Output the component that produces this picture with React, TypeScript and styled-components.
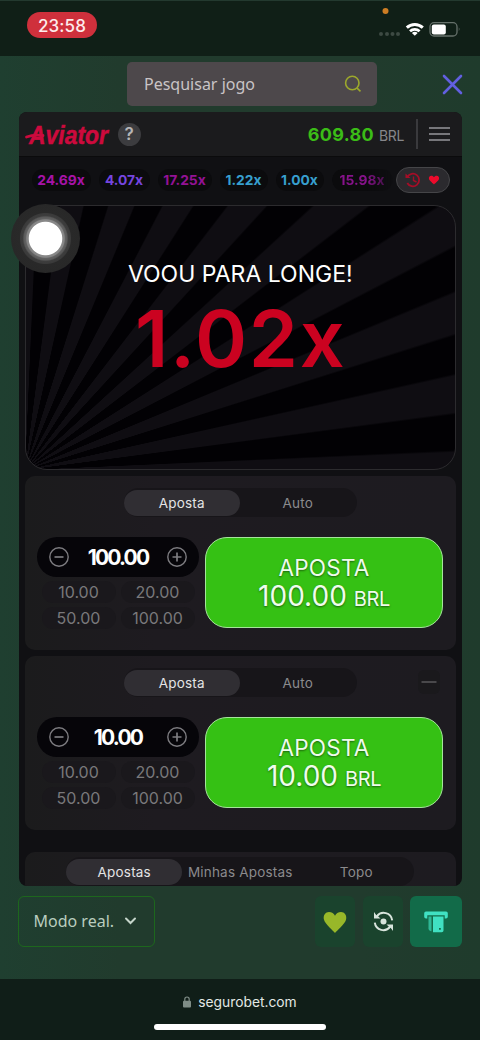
import React from "react";
import styled, { createGlobalStyle } from "styled-components";

const Global = createGlobalStyle`
  * { box-sizing: border-box; }
  body { margin: 0; background: #213b2e; }
  svg { display: block; flex: none; overflow: visible; }
`;

const Page = styled.div`
  position: relative;
  width: 480px;
  height: 1040px;
  overflow: hidden;
  display: flex;
  flex-direction: column;
  background: linear-gradient(90deg, #1f3f30, #213b2d 25%, #213b2d 75%, #1f3b2c);
  font-family: Inter, sans-serif;
  color: #fff;
`;

const StatusBar = styled.header`
  height: 56px;
  flex: none;
  display: flex;
  justify-content: space-between;
  align-items: flex-start;
  padding: 3px 20px 0 27px;
  background: #101f17;
  border-top: 1px solid #23392f;
`;

const Clock = styled.div`
  width: 70px;
  height: 26px;
  margin-top: 8px;
  border-radius: 13px;
  background: #cf303c;
  color: #fdecec;
  font-size: 17px;
  font-weight: 500;
  line-height: 28px;
  text-align: center;
  letter-spacing: 0.1px;
`;

const SearchRow = styled.div`
  height: 56px;
  flex: none;
  display: flex;
  align-items: center;
  justify-content: space-between;
  padding: 0 17px 0 127px;
`;

const SearchBox = styled.div`
  width: 250px;
  height: 44px;
  display: flex;
  align-items: center;
  justify-content: space-between;
  padding: 0 15px 0 17px;
  border-radius: 5px;
  background: #4d484b;
  color: #c9c4c6;
  font: 16px "Noto Sans", sans-serif;
`;

const Game = styled.main`
  width: 443px;
  height: 774px;
  flex: none;
  margin-left: 18.5px;
  overflow: hidden;
  border-radius: 8px;
  background: #101013;
  display: flex;
  flex-direction: column;
`;

const GameHeader = styled.div`
  height: 45px;
  flex: none;
  display: flex;
  align-items: center;
  padding: 0 11.5px 0 2px;
  background: #1b1b1d;
  border-bottom: 1.5px solid #0b0b0c;
`;

const Help = styled.div`
  width: 23px;
  height: 23px;
  margin-left: 5px;
  border-radius: 50%;
  background: #3c3c3f;
  color: #b5b5b7;
  font-size: 17px;
  font-weight: 600;
  line-height: 23px;
  text-align: center;
`;

const Balance = styled.div`
  margin-left: auto;
  display: flex;
  align-items: baseline;
  gap: 5px;
  color: #3bbd17;
  font-size: 18px;
  font-weight: 700;
  letter-spacing: 0.35px;
`;

const Currency = styled.span`
  color: #86868a;
  font-size: 14px;
  font-weight: 400;
  letter-spacing: -0.4px;
`;

const Divider = styled.div`
  width: 1.5px;
  height: 30px;
  margin: 0 11.5px 0 12px;
  background: #3a3a3d;
`;

const History = styled.div`
  height: 46px;
  margin-bottom: 2px;
  flex: none;
  display: flex;
  align-items: center;
  padding: 0 12px 0 13px;
  font-size: 13.8px;
  font-weight: 700;
`;

const Multiplier = styled.span<{ $w: number; $color: string; $fade?: boolean }>`
  width: ${(p) => p.$w}px;
  height: 22px;
  flex: none;
  margin-right: 8px;
  border-radius: 11px;
  background: #0b0b0d;
  color: ${(p) => p.$color};
  line-height: 22px;
  text-align: center;
  white-space: nowrap;
  ${(p) => p.$fade && "margin-right: 0; mask-image: linear-gradient(90deg, #000 55%, rgba(0,0,0,.25));"}
`;

const HistoryButton = styled.div`
  width: 54px;
  height: 26px;
  margin-left: auto;
  display: flex;
  align-items: center;
  justify-content: center;
  gap: 7px;
  border: 1.5px solid #454548;
  border-radius: 13px;
  background: #2b2a2e;
`;

const Flight = styled.section`
  height: 265px;
  flex: none;
  margin: 0 5.5px 0 6px;
  padding-top: 54px;
  border: 1px solid #2c2b2e;
  border-radius: 22px;
  background: repeating-conic-gradient(
    from 0deg at -1px 264px,
    #0f0d12 0deg 2.35deg,
    #020104 2.65deg 7.35deg,
    #0f0d12 7.65deg 10deg
  );
  display: flex;
  flex-direction: column;
  align-items: center;
`;

const FlightCaption = styled.div`
  font-size: 23px;
  line-height: 28px;
  white-space: nowrap;
`;

const FlightValue = styled.div`
  margin: 3px 0 0 1px;
  color: #cb0220;
  font-size: 79px;
  font-weight: 600;
  line-height: 94px;
  letter-spacing: 1.8px;
  white-space: nowrap;
`;

const Panel = styled.section`
  position: relative;
  height: 174px;
  flex: none;
  margin: 6px 5.5px 0 6px;
  padding-top: 12px;
  border-radius: 10px;
  background: linear-gradient(90deg, #1b1b1c, #1e1b20 30%, #1d1b20);
`;

const Tabs = styled.div<{ $w: number }>`
  width: ${(p) => p.$w}px;
  height: 29px;
  margin: 0 auto;
  display: flex;
  align-items: center;
  border-radius: 15px;
  background: #171519;
`;

const Tab = styled.div<{ $active?: boolean }>`
  width: 116px;
  height: 26px;
  border-radius: 13px;
  background: ${(p) => (p.$active ? "#302e33" : "transparent")};
  color: ${(p) => (p.$active ? "#e4e4e5" : "#8b8a8d")};
  font-size: 13.5px;
  line-height: 26px;
  text-align: center;
  letter-spacing: 0.2px;
  white-space: nowrap;
`;

const Collapse = styled.div`
  position: absolute;
  right: 16px;
  top: 14px;
  width: 22px;
  height: 24px;
  display: flex;
  align-items: center;
  justify-content: center;
  border-radius: 6px;
  background: #1a191c;
`;

const BetRow = styled.div`
  display: flex;
  gap: 6px;
  padding: 20px 0 0 12.5px;
`;

const StakeColumn = styled.div`
  width: 162px;
`;

const Stepper = styled.div`
  height: 40px;
  display: flex;
  align-items: center;
  justify-content: space-between;
  padding: 0 12px;
  border-radius: 20px;
  background: #060509;
`;

const Stake = styled.span`
  font-size: 21px;
  font-weight: 700;
  letter-spacing: -1.8px;
`;

const QuickGrid = styled.div`
  display: grid;
  grid-template-columns: 74px 74px;
  gap: 3.5px 5px;
  padding: 4px 0 0 4.5px;
`;

const Quick = styled.div`
  height: 22px;
  border-radius: 11px;
  background: #1a181c;
  color: #79787b;
  font-size: 16px;
  line-height: 22px;
  text-align: center;
`;

const BetButton = styled.div`
  width: 238px;
  height: 91px;
  padding-top: 15px;
  border: 1.5px solid #a5e59b;
  border-radius: 22px;
  background: #35c114;
  color: #effcec;
  text-align: center;
  text-shadow: 0 1px 2px rgba(0, 0, 0, 0.5);
`;

const BetLabel = styled.div`
  font-size: 22.5px;
  line-height: 29px;
  letter-spacing: 0.2px;
`;

const BetValue = styled.div`
  font-size: 28px;
  line-height: 29px;
  white-space: nowrap;
`;

const BetCurrency = styled.span`
  font-size: 20px;
  margin-left: 7px;
  letter-spacing: -0.4px;
`;

const BetsFeed = styled(Panel)`
  height: 50px;
  margin-top: 22px;
  padding-top: 5px;
`;

const Toolbar = styled.div`
  height: 93px;
  flex: none;
  display: flex;
  align-items: flex-start;
  padding: 10px 18px 0;
`;

const ModeSelect = styled.div`
  width: 137px;
  height: 51px;
  margin-right: auto;
  display: flex;
  align-items: center;
  gap: 11px;
  padding: 0 0 1px 14.5px;
  border: 1.5px solid #1d671d;
  border-radius: 6px;
  color: #b9cdbf;
  font: 16px "Noto Sans", sans-serif;
`;

const ToolButton = styled.div<{ $primary?: boolean }>`
  width: ${(p) => (p.$primary ? 52 : 40)}px;
  height: 51px;
  margin-left: ${(p) => (p.$primary ? 7 : 8)}px;
  display: flex;
  align-items: center;
  justify-content: center;
  border-radius: 6px;
  background: ${(p) => (p.$primary ? "#126b49" : "#1a432d")};
`;

const AddressBar = styled.footer`
  flex: 1;
  display: flex;
  flex-direction: column;
  align-items: center;
  padding-top: 13px;
  background: #101e18;
`;

const Address = styled.div`
  display: flex;
  align-items: center;
  gap: 7px;
  font-size: 13.8px;
  line-height: 20px;
  color: #e3e9e5;
`;

const HomeIndicator = styled.div`
  width: 172px;
  height: 6px;
  margin-top: 12px;
  border-radius: 3px;
  background: #fff;
`;

const AssistiveTouch = styled.div`
  position: absolute;
  left: 10.5px;
  top: 204px;
  width: 69px;
  height: 69px;
  border-radius: 50%;
  background: radial-gradient(
    circle,
    #fff 16.3px,
    #8a8a8a 17.2px,
    #858585 18.8px,
    #626262 19.8px,
    #5a5a5a 21.5px,
    #3d3d3d 22.8px,
    #3a3a3a 25px,
    #292929 26px,
    #282828 34px
  );
`;

function Logo() {
  return (
    <svg width="92" height="34" viewBox="0 0 92 34">
      <g fill="#cd0a3d" stroke="#cd0a3d">
        <text
          x="8"
          y="27"
          textLength="79"
          lengthAdjust="spacingAndGlyphs"
          fontFamily="Liberation Sans Narrow, Liberation Sans, sans-serif"
          fontStyle="italic"
          fontWeight="700"
          fontSize="26"
          strokeWidth="0.5"
        >
          Aviator
        </text>
        <path d="M5.500 20 Q12 17.500 22 18.500" fill="none" strokeWidth="2.8" strokeLinecap="round" />
      </g>
    </svg>
  );
}

function StatusIcons() {
  return (
    <svg width="84" height="36" viewBox="376 4 84 36">
      <circle cx="385.5" cy="11" r="3" fill="#cd7d24" />
      {[381, 387, 392.5, 398].map((x) => (
        <circle key={x} cx={x} cy="34" r="2" fill="#3d4a43" />
      ))}
      <g fill="none" stroke="#fff" strokeWidth="3">
        <path d="M406.8 27.6 A11.7 11.7 0 0 1 422.8 27.6" />
        <path d="M410 31.2 A7 7 0 0 1 419.6 31.2" strokeWidth="2.7" />
      </g>
      <path d="M414.8 35.8 L411.9 33 Q414.8 30.6 417.7 33 Z" fill="#fff" />
      <rect x="430" y="22.7" width="27" height="13.3" rx="4" fill="none" stroke="#66716b" strokeWidth="1.3" />
      <rect x="431.8" y="24.4" width="14" height="10" rx="2" fill="#fff" />
      <path d="M458.8 27.3 q1.8 2 0 4z" fill="#66716b" />
    </svg>
  );
}

const HEART =
  "M12 21 C10.5 19.6 2 12.7 1 9 C-.2 4.8 2.6 1.8 6 1.8 C8.8 1.8 11 3.3 12 5.2 C13 3.3 15.2 1.8 18 1.8 C21.4 1.8 24.2 4.8 23 9 C22 12.7 13.5 19.6 12 21 Z";

function StepIcon({ plus }: { plus?: boolean }) {
  return (
    <svg width="20" height="20" viewBox="0 0 20 20" fill="none" stroke="#7d7c80" strokeWidth="1.4">
      <circle cx="10" cy="10" r="9.2" />
      <path d={plus ? "M5.5 10h9M10 5.5v9" : "M5.5 10h9"} strokeWidth="1.7" />
    </svg>
  );
}

function BetPanel({ amount, collapsible }: { amount: string; collapsible?: boolean }) {
  return (
    <Panel>
      <Tabs $w={233}>
        <Tab $active>Aposta</Tab>
        <Tab>Auto</Tab>
      </Tabs>
      {collapsible && (
        <Collapse>
          <svg width="16" height="4">
            <path d="M0.5 2h15" stroke="#49484b" strokeWidth="2" />
          </svg>
        </Collapse>
      )}
      <BetRow>
        <StakeColumn>
          <Stepper>
            <StepIcon />
            <Stake>{amount}</Stake>
            <StepIcon plus />
          </Stepper>
          <QuickGrid>
            {["10.00", "20.00", "50.00", "100.00"].map((v) => (
              <Quick key={v}>{v}</Quick>
            ))}
          </QuickGrid>
        </StakeColumn>
        <BetButton>
          <BetLabel>APOSTA</BetLabel>
          <BetValue>
            {amount}
            <BetCurrency>BRL</BetCurrency>
          </BetValue>
        </BetButton>
      </BetRow>
    </Panel>
  );
}

export default function App() {
  return (
    <Page>
      <Global />
      <StatusBar>
        <Clock>23:58</Clock>
        <StatusIcons />
      </StatusBar>
      <SearchRow>
        <SearchBox>
          Pesquisar jogo
          <svg width="18" height="18" viewBox="0 0 18 18" fill="none" stroke="#9ca82c" strokeWidth="1.6">
            <circle cx="8.3" cy="8" r="6.7" />
            <path d="M12.8 12.8 L16.5 16.3" />
          </svg>
        </SearchBox>
        <svg width="21" height="21" viewBox="0 0 21 21">
          <path d="M2 2 L19 19 M19 2 L2 19" stroke="#625fe0" strokeWidth="2.6" strokeLinecap="round" />
        </svg>
      </SearchRow>
      <Game>
        <GameHeader>
          <Logo />
          <Help>?</Help>
          <Balance>
            609.80 <Currency>BRL</Currency>
          </Balance>
          <Divider />
          <svg width="21" height="16" viewBox="0 0 21 16">
            <path d="M0 2h21M0 8h21M0 14h21" stroke="#77777b" strokeWidth="2" />
          </svg>
        </GameHeader>
        <History>
          <Multiplier $w={59} $color="#a713a8">24.69x</Multiplier>
          <Multiplier $w={51} $color="#7545df">4.07x</Multiplier>
          <Multiplier $w={54} $color="#941295">17.25x</Multiplier>
          <Multiplier $w={48} $color="#379fce">1.22x</Multiplier>
          <Multiplier $w={48} $color="#379fce">1.00x</Multiplier>
          <Multiplier $w={61} $color="#86128a" $fade>15.98x</Multiplier>
          <HistoryButton>
            <svg width="16" height="16" viewBox="0 0 16 16" fill="none" stroke="#a50d27" strokeWidth="1.8">
              <path d="M2.3 5 A6.3 6.3 0 1 1 2.3 11" />
              <path d="M8.5 4.5v4l3 1.5" strokeWidth="1.4" />
              <path d="M0.5 1.5v4.5h5z" fill="#a50d27" stroke="none" />
            </svg>
            <svg width="12" height="10" viewBox="0 0 24 22">
              <path d={HEART} fill="#ed0b2c" />
            </svg>
          </HistoryButton>
        </History>
        <Flight>
          <FlightCaption>VOOU PARA LONGE!</FlightCaption>
          <FlightValue>1.02x</FlightValue>
        </Flight>
        <BetPanel amount="100.00" />
        <BetPanel amount="10.00" collapsible />
        <BetsFeed>
          <Tabs $w={348}>
            <Tab $active>Apostas</Tab>
            <Tab>Minhas Apostas</Tab>
            <Tab>Topo</Tab>
          </Tabs>
        </BetsFeed>
      </Game>
      <Toolbar>
        <ModeSelect>
          Modo real.
          <svg width="11" height="8" viewBox="0 0 11 8" fill="none" stroke="#c5d5ca" strokeWidth="2">
            <path d="M1 1.5 L5.5 6 L10 1.5" strokeLinecap="round" />
          </svg>
        </ModeSelect>
        <ToolButton>
          <svg width="24" height="24" viewBox="0 0 24 22" preserveAspectRatio="none">
            <path d={HEART} fill="#98b729" />
          </svg>
        </ToolButton>
        <ToolButton>
          <svg width="21" height="21" viewBox="0 0 21 21" fill="none" stroke="#d8e4dc" strokeWidth="2">
            <path d="M3.8 5.3 A8.6 8.6 0 0 1 19.2 9.3" />
            <path d="M17.2 15.7 A8.6 8.6 0 0 1 1.8 11.7" />
            <path d="M1 1v6.5h6.5L5.3 5.6 3.2 4z M20 20v-6.5h-6.5l2.2 1.9 2.1 1.6z" fill="#d8e4dc" stroke="none" />
            <circle cx="10.5" cy="10.5" r="3" fill="#d8e4dc" stroke="none" />
          </svg>
        </ToolButton>
        <ToolButton $primary>
          <svg width="24" height="22" viewBox="0 0 24 22" fill="#40e1c2">
            <path d="M2 0.5h20a1.8 1.8 0 0 1 1.8 1.8v3.4a1.8 1.8 0 0 1-1.8 1.8h-1.3V4.2H3.3v3.3H2A1.8 1.8 0 0 1 .2 5.7V2.3A1.8 1.8 0 0 1 2 .5z" />
            <path d="M4.5 5.600h3v14.600q-3-.3-3-2.700z" fill="#2fb795" />
            <path fillRule="evenodd" d="M9 5.600h10.500v13.900a1.800 1.800 0 0 1-1.800 1.800H9z M15 17v1.800h1.800V17z" />
          </svg>
        </ToolButton>
      </Toolbar>
      <AddressBar>
        <Address>
          <svg width="8" height="12" viewBox="0 0 8 12">
            <rect x="0" y="4.8" width="8" height="6.7" rx="1" fill="#7f8d86" />
            <path d="M1.8 5.5V3.2a2.2 2.2 0 0 1 4.4 0v2.3" fill="none" stroke="#7f8d86" strokeWidth="1.2" />
          </svg>
          segurobet.com
        </Address>
        <HomeIndicator />
      </AddressBar>
      <AssistiveTouch />
    </Page>
  );
}
